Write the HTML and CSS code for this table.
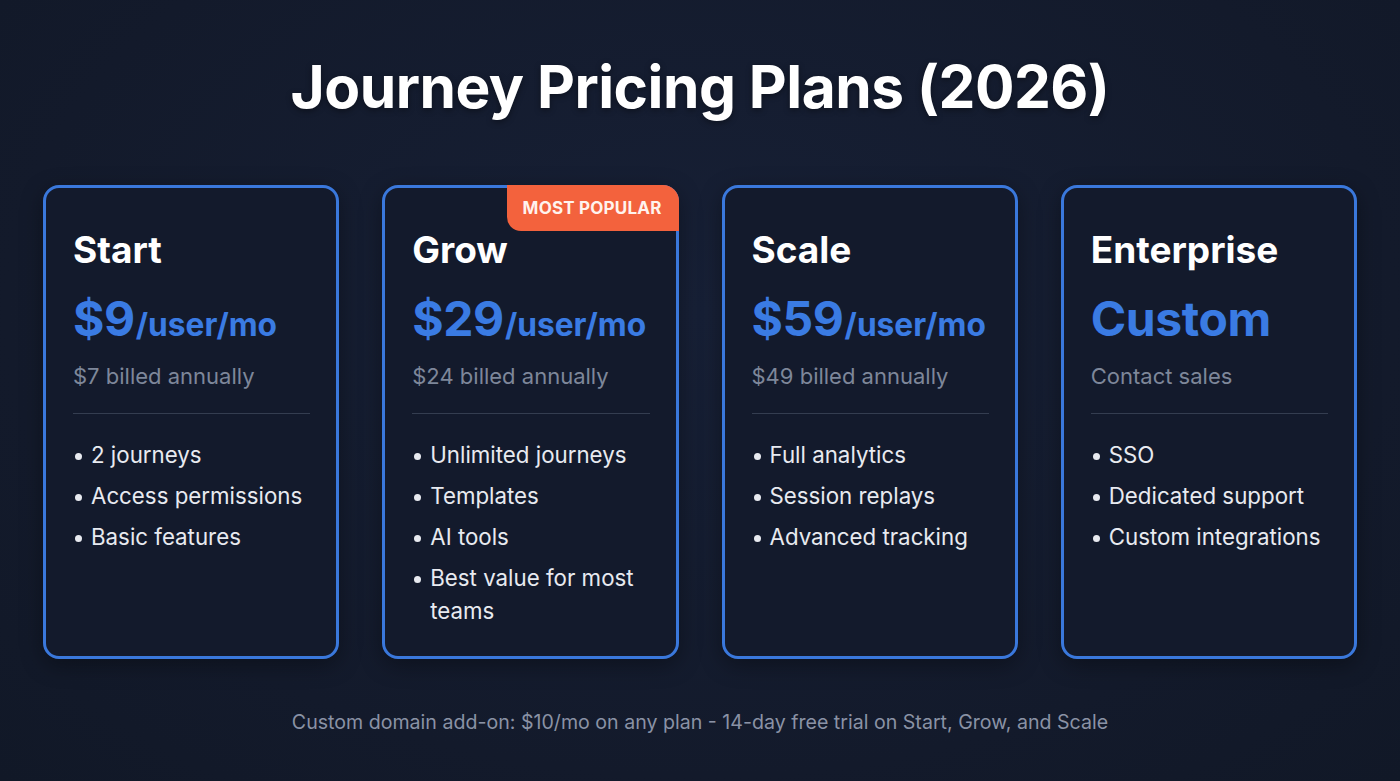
FILE: index.html
```html
<!DOCTYPE html>
<html lang="en">
<head>
<meta charset="utf-8">
<title>Journey Pricing Plans (2026)</title>
<link rel="stylesheet" href="styles.css">
</head>
<body>
<main class="page">
  <h1 class="title">Journey Pricing Plans (2026)</h1>
  <section class="plans">
    <article class="card">
      <h2 class="name">Start</h2>
      <p class="price"><span class="amount">$9</span><span class="unit">/user/mo</span></p>
      <p class="note">$7 billed annually</p>
      <hr class="divider">
      <ul class="features">
        <li>2 journeys</li>
        <li>Access permissions</li>
        <li>Basic features</li>
      </ul>
    </article>
    <article class="card">
      <span class="badge">MOST POPULAR</span>
      <h2 class="name">Grow</h2>
      <p class="price"><span class="amount">$29</span><span class="unit">/user/mo</span></p>
      <p class="note">$24 billed annually</p>
      <hr class="divider">
      <ul class="features">
        <li>Unlimited journeys</li>
        <li>Templates</li>
        <li>AI tools</li>
        <li>Best value for most teams</li>
      </ul>
    </article>
    <article class="card">
      <h2 class="name">Scale</h2>
      <p class="price"><span class="amount">$59</span><span class="unit">/user/mo</span></p>
      <p class="note">$49 billed annually</p>
      <hr class="divider">
      <ul class="features">
        <li>Full analytics</li>
        <li>Session replays</li>
        <li>Advanced tracking</li>
      </ul>
    </article>
    <article class="card">
      <h2 class="name">Enterprise</h2>
      <p class="price"><span class="amount">Custom</span></p>
      <p class="note">Contact sales</p>
      <hr class="divider">
      <ul class="features">
        <li>SSO</li>
        <li>Dedicated support</li>
        <li>Custom integrations</li>
      </ul>
    </article>
  </section>
  <p class="footer">Custom domain add-on: $10/mo on any plan - 14-day free trial on Start, Grow, and Scale</p>
</main>
</body>
</html>
```

FILE: styles.css
```css
* { box-sizing: border-box; }
html, body { margin: 0; padding: 0; }
body {
  width: 1400px;
  height: 781px;
  overflow: hidden;
  background: radial-gradient(ellipse at 50% 40%, #172036 0%, #131a2b 70%, #111827 100%);
  font-family: Inter, "Noto Sans", "Liberation Sans", sans-serif;
  color: #f3f4f7;
}
.page {
  display: flex;
  flex-direction: column;
  align-items: center;
  padding-top: 52px;
}
.title {
  margin: 0;
  font-size: 58.6px;
  font-weight: 700;
  line-height: 70px;
  letter-spacing: -0.5px;
  color: #ffffff;
  text-shadow: 0 2px 6px rgba(0,0,0,0.4);
}
.plans {
  display: grid;
  grid-template-columns: repeat(4, 1fr);
  gap: 43px;
  width: 100%;
  padding: 0 43px;
  margin-top: 63px;
}
.card {
  position: relative;
  height: 474px;
  border: 3px solid #3a78dc;
  border-radius: 16px;
  background: #131a2c;
  padding: 38px 27px 0 27px;
  box-shadow: 0 6px 22px rgba(0,0,0,0.35);
}
.badge {
  position: absolute;
  top: -3px;
  right: -3px;
  background: #f3623d;
  color: #fff3ee;
  font-size: 17px;
  font-weight: 700;
  line-height: 46px;
  padding: 0 17px 0 16px;
  border-radius: 0 16px 0 14px;
  letter-spacing: 0.2px;
}
.name {
  margin: 0;
  font-size: 37px;
  font-weight: 700;
  line-height: 48px;
  color: #ffffff;
}
.price {
  margin: 15px 0 0 0;
  line-height: 60px;
  color: #3a7be3;
  font-weight: 700;
}
.amount {
  font-size: 48px;
  letter-spacing: -0.4px;
}
.unit {
  margin-left: 1px;
  font-size: 31.7px;
}
.note {
  margin: 0;
  font-size: 22px;
  line-height: 32px;
  color: #7e879a;
}
.divider {
  border: 0;
  border-top: 1px solid #343d50;
  margin: 21px -1px 0 0;
}
.features {
  list-style: none;
  margin: 24px 0 0 0;
  padding: 0;
  display: flex;
  flex-direction: column;
  gap: 8px;
}
.features li {
  position: relative;
  padding-left: 18px;
  font-size: 22.3px;
  line-height: 33px;
  color: #e8eaf0;
}
.features li::before {
  content: "";
  position: absolute;
  left: 2px;
  top: 15px;
  width: 7px;
  height: 7px;
  border-radius: 50%;
  background: #e8eaf0;
}
.footer {
  margin: 50px 0 0 0;
  font-size: 19.6px;
  line-height: 26px;
  color: #8a92a5;
}
```
